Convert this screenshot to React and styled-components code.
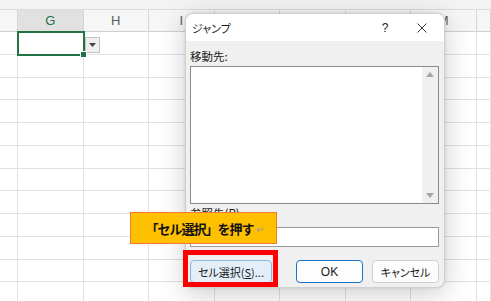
import React from 'react';
import styled, { createGlobalStyle } from 'styled-components';

const GlobalStyle = createGlobalStyle`
  html, body { margin: 0; padding: 0; background: #fff; }
  body { overflow: hidden; font-family: "Noto Sans CJK JP", "Noto Sans", sans-serif; }
  * { box-sizing: border-box; }
`;

const Page = styled.div`
  position: relative;
  width: 491px;
  height: 301px;
  overflow: hidden;
  background: #fff;
  display: flex;
  flex-direction: column;
`;

const TopBand = styled.div`
  height: 10px;
  flex: none;
  background: #f3f3f3;
  border-bottom: 1px solid #dcdcdc;
`;

const Grid = styled.div`
  display: grid;
  grid-template-columns: 18px repeat(7, 65.5px) 1fr;
  grid-template-rows: 22px;
  grid-auto-rows: 22.75px;
`;

const HeaderCell = styled.div`
  background: ${p => (p.$active ? '#e1e1e1' : '#f6f6f6')};
  border-right: 1px solid #d6d6d6;
  border-bottom: 1px solid #cfcfcf;
  color: ${p => (p.$active ? '#217346' : '#5a5a5a')};
  font: 13px "Liberation Sans", Arial, sans-serif;
  display: flex;
  align-items: center;
  justify-content: center;
`;

const Cell = styled.div`
  position: relative;
  border-right: 1px solid #e1e1e1;
  border-bottom: 1px solid #e1e1e1;
  ${p =>
    p.$selected &&
    `
    z-index: 2;
    &::before {
      content: '';
      position: absolute;
      left: -1px; top: -1px; right: -2px; bottom: -2px;
      border: 2px solid #217346;
    }
    &::after {
      content: '';
      position: absolute;
      right: -4px; bottom: -4px;
      width: 5px; height: 5px;
      background: #217346;
      border: 1px solid #fff;
    }
  `}
`;

const DropButton = styled.div`
  position: absolute;
  left: 67px;
  top: 5px;
  width: 15px;
  height: 16px;
  background: #f0f0f0;
  border: 1px solid #c3c3c3;
  display: flex;
  align-items: center;
  justify-content: center;
`;

const Dialog = styled.div`
  position: absolute;
  left: 185px;
  top: 13px;
  width: 260px;
  height: 275px;
  border-radius: 8px;
  background: #f0f0f0;
  border: 1px solid #cfcfcf;
  box-shadow: 0 6px 28px rgba(0, 0, 0, 0.2), 0 0 3px rgba(0, 0, 0, 0.12);
  overflow: hidden;
  display: flex;
  flex-direction: column;
  z-index: 5;
`;

const TitleBar = styled.div`
  height: 27px;
  flex: none;
  background: #fff;
  display: flex;
  align-items: center;
  padding-left: 6px;
`;

const Title = styled.div`
  flex: 1;
  font-size: 11px;
  color: #222;
  font-feature-settings: "palt";
`;

const TitleButton = styled.div`
  width: ${p => p.$w}px;
  height: 27px;
  display: flex;
  align-items: center;
  justify-content: center;
  font: 12px "Liberation Sans", Arial, sans-serif;
  color: #222;
`;

const Body = styled.div`
  flex: 1;
  display: flex;
  flex-direction: column;
  padding: 8px 5px 0 4px;
`;

const Label = styled.div`
  font-size: 11.5px;
  line-height: 14px;
  color: #1a1a1a;
  margin-bottom: ${p => p.$mb || 0}px;
`;

const ListBox = styled.div`
  height: 138px;
  background: #fff;
  border: 1px solid #8a8a8a;
  display: flex;
  justify-content: flex-end;
  margin-bottom: 2px;
`;

const ScrollBar = styled.div`
  width: 16px;
  background: #f0f0f0;
  display: flex;
  flex-direction: column;
  justify-content: space-between;
  align-items: center;
  padding: 5px 0 5px;
`;

const Input = styled.div`
  height: 20px;
  background: #fff;
  border: 1px solid #9a9a9a;
  margin-top: 7px;
`;

const ButtonRow = styled.div`
  display: flex;
  align-items: center;
  margin-top: 13px;
  gap: 9px;
`;

const Button = styled.div`
  height: 23px;
  width: ${p => p.$w}px;
  margin-right: ${p => p.$mr || 0}px;
  border-radius: 4px;
  border: 1px solid ${p => (p.$variant === 'primary' ? '#1a73c8' : p.$variant === 'focus' ? '#8ab8e6' : '#cfcfcf')};
  background: ${p => (p.$variant === 'focus' ? '#e3eef9' : '#fdfdfd')};
  display: flex;
  align-items: center;
  justify-content: center;
  font-size: 11px;
  color: #1a1a1a;
  font-feature-settings: "palt";
  u { text-decoration: underline; text-underline-offset: 1px; }
`;

const OkText = styled.span`
  font: 12px "Liberation Sans", Arial, sans-serif;
`;

const Callout = styled.div`
  position: absolute;
  left: 130px;
  top: 212px;
  width: 147px;
  height: 32px;
  background: #ffc000;
  border: 1px solid #ed7d31;
  display: flex;
  align-items: center;
  justify-content: center;
  padding-left: 2px;
  font-size: 13px;
  letter-spacing: -1px;
  font-weight: 700;
  color: #111;
  z-index: 7;
`;

const ReturnMark = styled.span`
  font-size: 10px;
  font-weight: 400;
  letter-spacing: 0;
  color: #9a9a9a;
  margin-left: 2px;
`;

const Highlight = styled.div`
  position: absolute;
  left: 183px;
  top: 250px;
  width: 95px;
  height: 37px;
  border: 5px solid #ff0000;
  z-index: 8;
`;

const Tri = ({ up }) => (
  <svg width="8" height="5" viewBox="0 0 8 5">
    <path d={up ? 'M0 5 L4 0 L8 5 Z' : 'M0 0 L8 0 L4 5 Z'} fill="#a6a6a6" />
  </svg>
);

const columns = ['', 'G', 'H', 'I', 'J', 'K', 'L', 'M', ''];
const ROWS = 12;

export default function App() {
  return (
    <>
      <GlobalStyle />
      <Page>
        <TopBand />
        <Grid>
          {columns.map((c, i) => (
            <HeaderCell key={`h${i}`} $active={c === 'G'}>
              {c}
            </HeaderCell>
          ))}
          {Array.from({ length: ROWS }).map((_, r) =>
            columns.map((c, i) => {
              const sel = r === 0 && c === 'G';
              return (
                <Cell key={`c${r}-${i}`} $selected={sel}>
                  {sel && (
                    <DropButton>
                      <svg width="7" height="4" viewBox="0 0 7 4">
                        <path d="M0 0 L7 0 L3.5 4 Z" fill="#444" />
                      </svg>
                    </DropButton>
                  )}
                </Cell>
              );
            })
          )}
        </Grid>

        <Dialog>
          <TitleBar>
            <Title>ジャンプ</Title>
            <TitleButton $w={30}>?</TitleButton>
            <TitleButton $w={44}>
              <svg width="10" height="10" viewBox="0 0 10 10">
                <path d="M0.5 0.5 L9.5 9.5 M9.5 0.5 L0.5 9.5" stroke="#333" strokeWidth="1" />
              </svg>
            </TitleButton>
          </TitleBar>
          <Body>
            <Label $mb={3}>移動先:</Label>
            <ListBox>
              <ScrollBar>
                <Tri up />
                <Tri />
              </ScrollBar>
            </ListBox>
            <Label>参照先(R):</Label>
            <Input />
            <ButtonRow>
              <Button $w={82} $mr={15} $variant="focus">
                セル選択(<u>S</u>)...
              </Button>
              <Button $w={67} $variant="primary">
                <OkText>OK</OkText>
              </Button>
              <Button $w={67}>キャンセル</Button>
            </ButtonRow>
          </Body>
        </Dialog>

        <Callout>
          「セル選択」を押す<ReturnMark>↵</ReturnMark>
        </Callout>
        <Highlight />
      </Page>
    </>
  );
}
